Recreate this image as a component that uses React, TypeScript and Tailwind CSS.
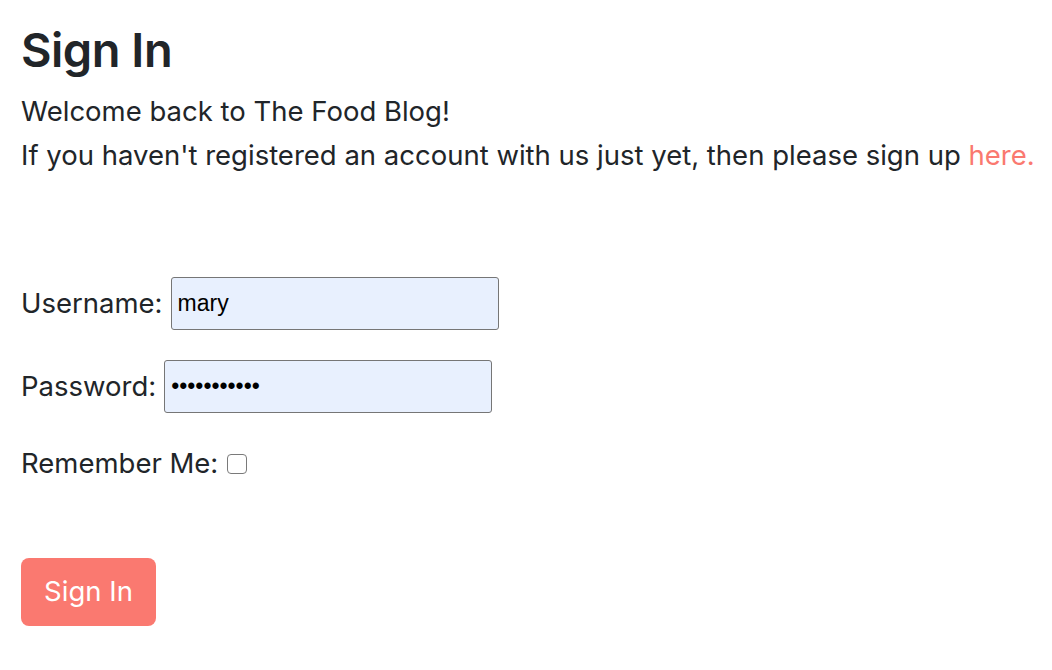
import React from 'react'

export default function App() {
  return (
    <div
      className="min-h-screen bg-white text-[#212529] px-[21px] pt-[20px]"
      style={{ fontFamily: 'Inter, "Noto Sans", sans-serif' }}
    >
      <h1 className="text-[47px] font-semibold leading-[60px] tracking-[-0.5px]">Sign In</h1>
      <div className="mt-[9px] text-[27.5px] leading-[44px] whitespace-nowrap">
        <p>Welcome back to The Food Blog!</p>
        <p>
          If you haven't registered an account with us just yet, then please sign up{' '}
          <a href="#" className="text-[#fa7970]">here.</a>
        </p>
      </div>

      <form className="mt-[100px] flex flex-col text-[27.5px]">
        <div className="flex items-center h-[53px]">
          <label htmlFor="username" className="mr-[8px]">Username:</label>
          <input
            id="username"
            type="text"
            defaultValue="mary"
            className="w-[328px] h-[53px] bg-[#e8f0fe] border border-[#767676] rounded-[3px] px-[6px] text-[23px] text-black outline-none"
            style={{ fontFamily: '"Liberation Sans", Arial, sans-serif' }}
          />
        </div>
        <div className="flex items-center h-[53px] mt-[30px]">
          <label htmlFor="password" className="mr-[8px]">Password:</label>
          <input
            id="password"
            type="password"
            defaultValue="marypasswrd"
            className="w-[328px] h-[53px] bg-[#e8f0fe] border border-[#767676] rounded-[3px] px-[6px] text-[23px] text-black outline-none"
            style={{ fontFamily: '"Liberation Sans", Arial, sans-serif' }}
          />
        </div>
        <div className="flex items-center mt-[35px] h-[32px]">
          <label htmlFor="remember" className="mr-[9px]">Remember Me:</label>
          <input
            id="remember"
            type="checkbox"
            className="appearance-none w-[20px] h-[20px] border-[1.5px] border-[#7a7a7a] rounded-[4px] bg-white"
          />
        </div>
        <div className="mt-[78px]">
          <button
            type="button"
            className="w-[135px] h-[68px] bg-[#fa7970] text-white text-[27.5px] rounded-[8px]"
          >
            Sign In
          </button>
        </div>
      </form>
    </div>
  )
}
